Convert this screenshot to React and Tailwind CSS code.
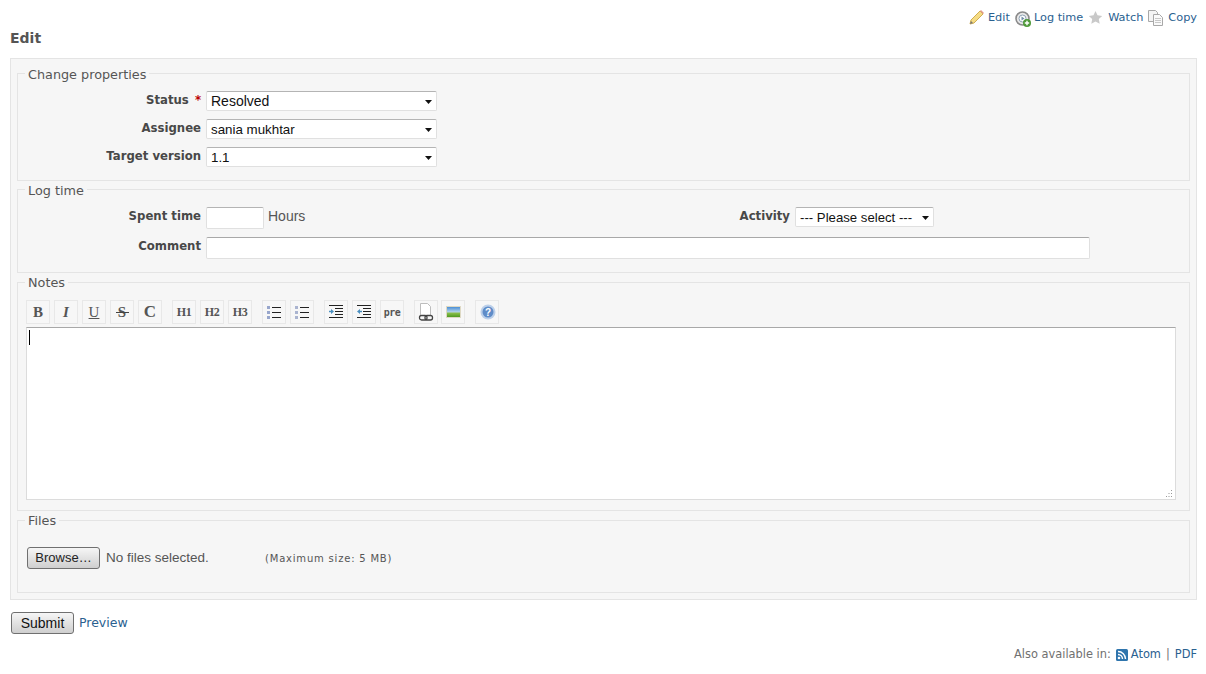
import React from "react";

const serif = "font-['Liberation_Serif',serif] font-bold text-[#555]";

function Arrow() {
  return (
    <svg width="7" height="4" viewBox="0 0 7 4" className="absolute right-[5px] top-[9px]">
      <path d="M0 0h7L3.5 4z" fill="#111" />
    </svg>
  );
}

function Select({ value, width, size = "pt-px text-[13.330px]" }) {
  return (
    <div className={`relative h-[20px] ${width}`}>
      <select
        defaultValue={value}
        className={`block h-[20px] w-full appearance-none rounded-[2px] border border-[#e0e0e0] border-t-[#b4b4b4] bg-white pl-[4px] font-['Liberation_Sans',sans-serif] ${size} leading-[18px] text-[#111]`}
      >
        <option>{value}</option>
      </select>
      <Arrow />
    </div>
  );
}

function Legend({ children, leading = "leading-[18px]" }) {
  return <legend className={`ml-[7px] h-[16px] px-[3px] text-[12.800px] ${leading} text-[#555]`}>{children}</legend>;
}

function Label({ width, children }) {
  return <label className={`${width} shrink-0 pt-px text-right text-[11.700px] leading-[16px] font-bold text-[#484848]`}>{children}</label>;
}

function Tool({ children, className = "" }) {
  return (
    <button
      type="button"
      className={`relative flex h-[24px] w-[24px] shrink-0 items-center justify-center border border-[#e8e8e8] bg-[#f7f7f7] ${className}`}
    >
      {children}
    </button>
  );
}

function ListIcon({ ordered }) {
  return (
    <svg width="16" height="16" viewBox="0 0 16 16">
      {[2, 7, 12].map((y) => (
        <g key={y}>
          <rect x="1" y={y} width="3" height="3" fill={ordered ? "#aab4d0" : "#98a6cc"} />
          <rect x="6" y={y + 1} width="9" height="1" fill="#222" />
        </g>
      ))}
    </svg>
  );
}

function IndentIcon({ out }) {
  return (
    <svg width="16" height="14" viewBox="0 0 16 14">
      <rect x="1" y="0" width="14" height="1" fill="#222" />
      <rect x="7" y="3" width="8" height="1" fill="#222" />
      <rect x="7" y="6" width="8" height="1" fill="#222" />
      <rect x="7" y="9" width="8" height="1" fill="#222" />
      <rect x="1" y="12" width="14" height="1" fill="#222" />
      <path d={out ? "M1 6.500 4 4v1.800h2v1.400H4V9z" : "M6 6.500 3 4v1.800H1v1.400h2V9z"} fill="#4a8fc0" />
    </svg>
  );
}

export default function App() {
  return (
    <div className="h-[674px] w-[1206px] overflow-hidden bg-white pr-[9px] pl-[10px] font-['DejaVu_Sans',sans-serif] text-[12px] text-[#555]">
      <div className="flex h-[25px] items-end justify-end text-[11.300px] leading-[14px] text-[#2a6190]">
        <svg width="16" height="16" viewBox="0 0 16 16" className="mr-[3px]">
          <path d="M2 11 11 2l3 3-9 9-4 1z" fill="#f5dc84" stroke="#d0ad52" />
          <path d="m11 2 1-1 3 3-1 1z" fill="#e39a8a" />
          <path d="m1 15 1-3 2 2z" fill="#777" />
        </svg>
        <a className="mr-[5px]">Edit</a>
        <svg width="16" height="16" viewBox="0 0 16 16" className="mr-[3px] mb-[-2px]">
          <circle cx="7.500" cy="7.500" r="6.500" fill="#e8e8e8" stroke="#8a8a8a" strokeWidth="1.600" />
          <circle cx="7.500" cy="7.500" r="3.500" fill="#fff" stroke="#8fa3b5" />
          <path d="M6.500 5.500v4l3-2z" fill="#6f8ba5" />
          <circle cx="12" cy="12" r="4" fill="#4f9a3a" />
          <path d="M12 9.800v4.400M9.800 12h4.400" stroke="#fff" strokeWidth="1.400" />
        </svg>
        <a className="mr-[5px]">Log time</a>
        <svg width="15" height="15" viewBox="0 0 15 15" className="mr-[5px]">
          <path d="m7.500 1 2 4.300 4.700.6-3.400 3.200.9 4.700-4.200-2.300-4.200 2.300.9-4.700L.8 5.900l4.700-.6z" fill="#c9c9c9" />
        </svg>
        <a className="mr-[5px]">Watch</a>
        <svg width="15" height="16" viewBox="0 0 15 16" className="mr-[5px] mb-[-1px]">
          <path d="M.5.500h7l2 2v9h-9z" fill="#f4f4f4" stroke="#a8a8a8" />
          <path d="M5.500 4.500h6l3 3v8h-9z" fill="#fafafa" stroke="#a8a8a8" />
          <path d="M7 8.500h6M7 10.500h6M7 12.500h6" stroke="#c8c8c8" />
        </svg>
        <a>Copy</a>
      </div>

      <h2 className="mt-[4px] h-[18px] text-[14px] leading-[18px] font-bold text-[#555]">Edit</h2>

      <form className="mt-[11px] flex flex-col gap-px border border-[#e4e4e4] bg-[#f6f6f6] pt-[6px] pr-[6px] pb-[6px] pl-[6px]">
        <fieldset className="border border-[#e4e4e4] pt-[10px] pb-[13px]">
          <Legend leading="leading-[20px]">Change properties</Legend>
          <div className="flex flex-col gap-[8px]">
            <div className="flex gap-[5px]">
              <Label width="w-[183px]">
                Status <span className="ml-[2px] text-[#b00]">*</span>
              </Label>
              <Select value="Resolved" width="w-[231px]" size="text-[14px]" />
            </div>
            <div className="flex gap-[5px]">
              <Label width="w-[183px]">Assignee</Label>
              <Select value="sania mukhtar" width="w-[231px]" />
            </div>
            <div className="flex gap-[5px]">
              <Label width="w-[183px]">Target version</Label>
              <Select value="1.1" width="w-[231px]" />
            </div>
          </div>
        </fieldset>

        <fieldset className="mt-[-1px] border border-[#e4e4e4] pt-[10px] pb-[13px]">
          <Legend leading="leading-[20px]">Log time</Legend>
          <div className="flex">
            <div className="flex w-[585px] gap-[5px]">
              <Label width="w-[183px]">Spent time</Label>
              <input className="h-[22px] w-[58px] rounded-[2px] border border-[#e0e0e0] border-t-[#b4b4b4] bg-white" />
              <span className="ml-[-1px] font-['Liberation_Sans',sans-serif] text-[14px] leading-[19px] text-[#555]">Hours</span>
            </div>
            <div className="flex gap-[5px]">
              <Label width="w-[187px]">Activity</Label>
              <Select value="--- Please select ---" width="w-[139px]" size="pt-px text-[13.200px]" />
            </div>
          </div>
          <div className="mt-[8px] flex gap-[5px]">
            <Label width="w-[183px]">Comment</Label>
            <input className="h-[22px] w-[884px] rounded-[2px] border border-[#e0e0e0] border-t-[#a8a8a8] bg-white" />
          </div>
        </fieldset>

        <fieldset className="border border-[#e4e4e4] pt-[10px] pb-[10px]">
          <Legend>Notes</Legend>
          <div className="flex pl-[8px]">
            <div className="flex gap-[4px]">
              <Tool><span className={`${serif} text-[15px]`}>B</span></Tool>
              <Tool><span className={`${serif} text-[15px] italic`}>I</span></Tool>
              <Tool><span className="font-['Liberation_Serif',serif] text-[15px] text-[#555] underline">U</span></Tool>
              <Tool>
                <span className={`${serif} text-[15px]`}>S</span>
                <span className="absolute top-[11px] left-[5px] h-px w-[13px] bg-[#444]" />
              </Tool>
              <Tool><span className={`${serif} text-[17px]`}>C</span></Tool>
            </div>
            <div className="ml-[10px] flex gap-[4px]">
              <Tool><span className={`${serif} text-[12px] tracking-[-0.5px]`}>H1</span></Tool>
              <Tool><span className={`${serif} text-[12px] tracking-[-0.5px]`}>H2</span></Tool>
              <Tool><span className={`${serif} text-[12px] tracking-[-0.5px]`}>H3</span></Tool>
            </div>
            <div className="ml-[10px] flex gap-[4px]">
              <Tool><ListIcon /></Tool>
              <Tool><ListIcon ordered /></Tool>
            </div>
            <div className="ml-[10px] flex gap-[4px]">
              <Tool><IndentIcon /></Tool>
              <Tool><IndentIcon out /></Tool>
              <Tool><span className="font-['DejaVu_Sans_Mono',monospace] text-[10px] font-bold tracking-[-0.5px] text-[#555]">pre</span></Tool>
            </div>
            <div className="ml-[10px] flex gap-[3px]">
              <Tool>
                <svg width="18" height="20" viewBox="0 0 18 20" className="shrink-0">
                  <path d="M3.500 1.500h7l3 3v9h-10z" fill="#fff" stroke="#bdbdbd" />
                  <rect x="2.500" y="13.500" width="7.500" height="4.500" rx="2" fill="none" stroke="#444" strokeWidth="1.300" />
                  <rect x="8" y="13.500" width="7.500" height="4.500" rx="2" fill="none" stroke="#444" strokeWidth="1.300" />
                </svg>
              </Tool>
              <Tool>
                <svg width="15" height="12" viewBox="0 0 15 12">
                  <defs>
                    <linearGradient id="sky" x1="0" y1="0" x2="0" y2="1">
                      <stop offset="0" stopColor="#4c8fd6" />
                      <stop offset="0.5" stopColor="#b4d4ea" />
                      <stop offset="0.6" stopColor="#8cc04a" />
                      <stop offset="1" stopColor="#4f9a22" />
                    </linearGradient>
                  </defs>
                  <rect width="15" height="12" fill="#ded9c4" />
                  <rect x="1" y="1" width="13" height="10" fill="url(#sky)" />
                </svg>
              </Tool>
            </div>
            <div className="ml-[10px] flex">
              <Tool>
                <svg width="16" height="16" viewBox="0 0 16 16" className="ml-px">
                  <circle cx="8" cy="8" r="7.500" fill="#bcd0ea" />
                  <circle cx="8" cy="8" r="5.500" fill="#5f8cc8" />
                  <text x="8" y="11.500" textAnchor="middle" fontSize="10" fontWeight="700" fill="#fff" fontFamily="Liberation Sans">?</text>
                </svg>
              </Tool>
            </div>
          </div>
          <div className="relative mt-[3px] ml-[8px] h-[173px] w-[1150px]">
            <textarea className="block h-full w-full resize-none border border-[#dcdcdc] border-t-[#a8a8a8] bg-white" />
            {/* caret */}
            <div className="absolute top-[3px] left-[3px] h-[15px] w-px bg-black" />
            <svg width="9" height="9" viewBox="0 0 9 9" className="absolute right-[3px] bottom-[2px]">
              <path d="M7 1h1v1H7zM4.500 4h1v1h-1zM7 4h1v1H7zM2 7h1v1H2zM4.500 7h1v1h-1zM7 7h1v1H7z" fill="#999" />
            </svg>
          </div>
        </fieldset>

        <fieldset className="border border-[#e4e4e4] pt-[19px] pb-[23px]">
          <Legend>Files</Legend>
          <div className="flex items-center pl-[9px]">
            <button
              type="button"
              className="h-[22px] w-[73px] rounded-[3px] border border-[#707070] bg-gradient-to-b from-[#f6f6f6] to-[#cfcfcf] font-['Liberation_Sans',sans-serif] text-[13px] leading-[18px] text-[#222]"
            >
              Browse…
            </button>
            <span className="ml-[6px] w-[159px] font-['Liberation_Sans',sans-serif] text-[13.500px] text-[#555]">No files selected.</span>
            <span className="text-[10px] tracking-[0.8px] text-[#555]">(Maximum size: 5 MB)</span>
          </div>
        </fieldset>
      </form>

      <div className="mt-[12px] ml-px flex items-center">
        <button
          type="button"
          className="h-[22px] w-[63px] rounded-[3px] border border-[#707070] bg-gradient-to-b from-[#f6f6f6] to-[#cfcfcf] font-['Liberation_Sans',sans-serif] text-[14px] leading-[18px] text-[#111]"
        >
          Submit
        </button>
        <a className="ml-[5px] text-[12.500px] leading-[18px] text-[#2a6190]">Preview</a>
      </div>

      <div className="mt-[12px] flex items-center justify-end text-[11.400px] leading-[16px] text-[#707070]">
        <span>Also available in:</span>
        <svg width="12" height="12" viewBox="0 0 12 12" className="mt-[2px] mr-[3px] ml-[5px]">
          <rect width="12" height="12" rx="1.500" fill="#2f75ad" />
          <circle cx="3" cy="9" r="1.300" fill="#fff" />
          <path d="M2 5.500A4.500 4.500 0 0 1 6.500 10M2 2.500A7.500 7.500 0 0 1 9.500 10" fill="none" stroke="#fff" strokeWidth="1.400" />
        </svg>
        <a className="text-[#2a6190]">Atom</a>
        <span className="mx-[5px]">|</span>
        <a className="text-[#2a6190]">PDF</a>
      </div>
    </div>
  );
}
